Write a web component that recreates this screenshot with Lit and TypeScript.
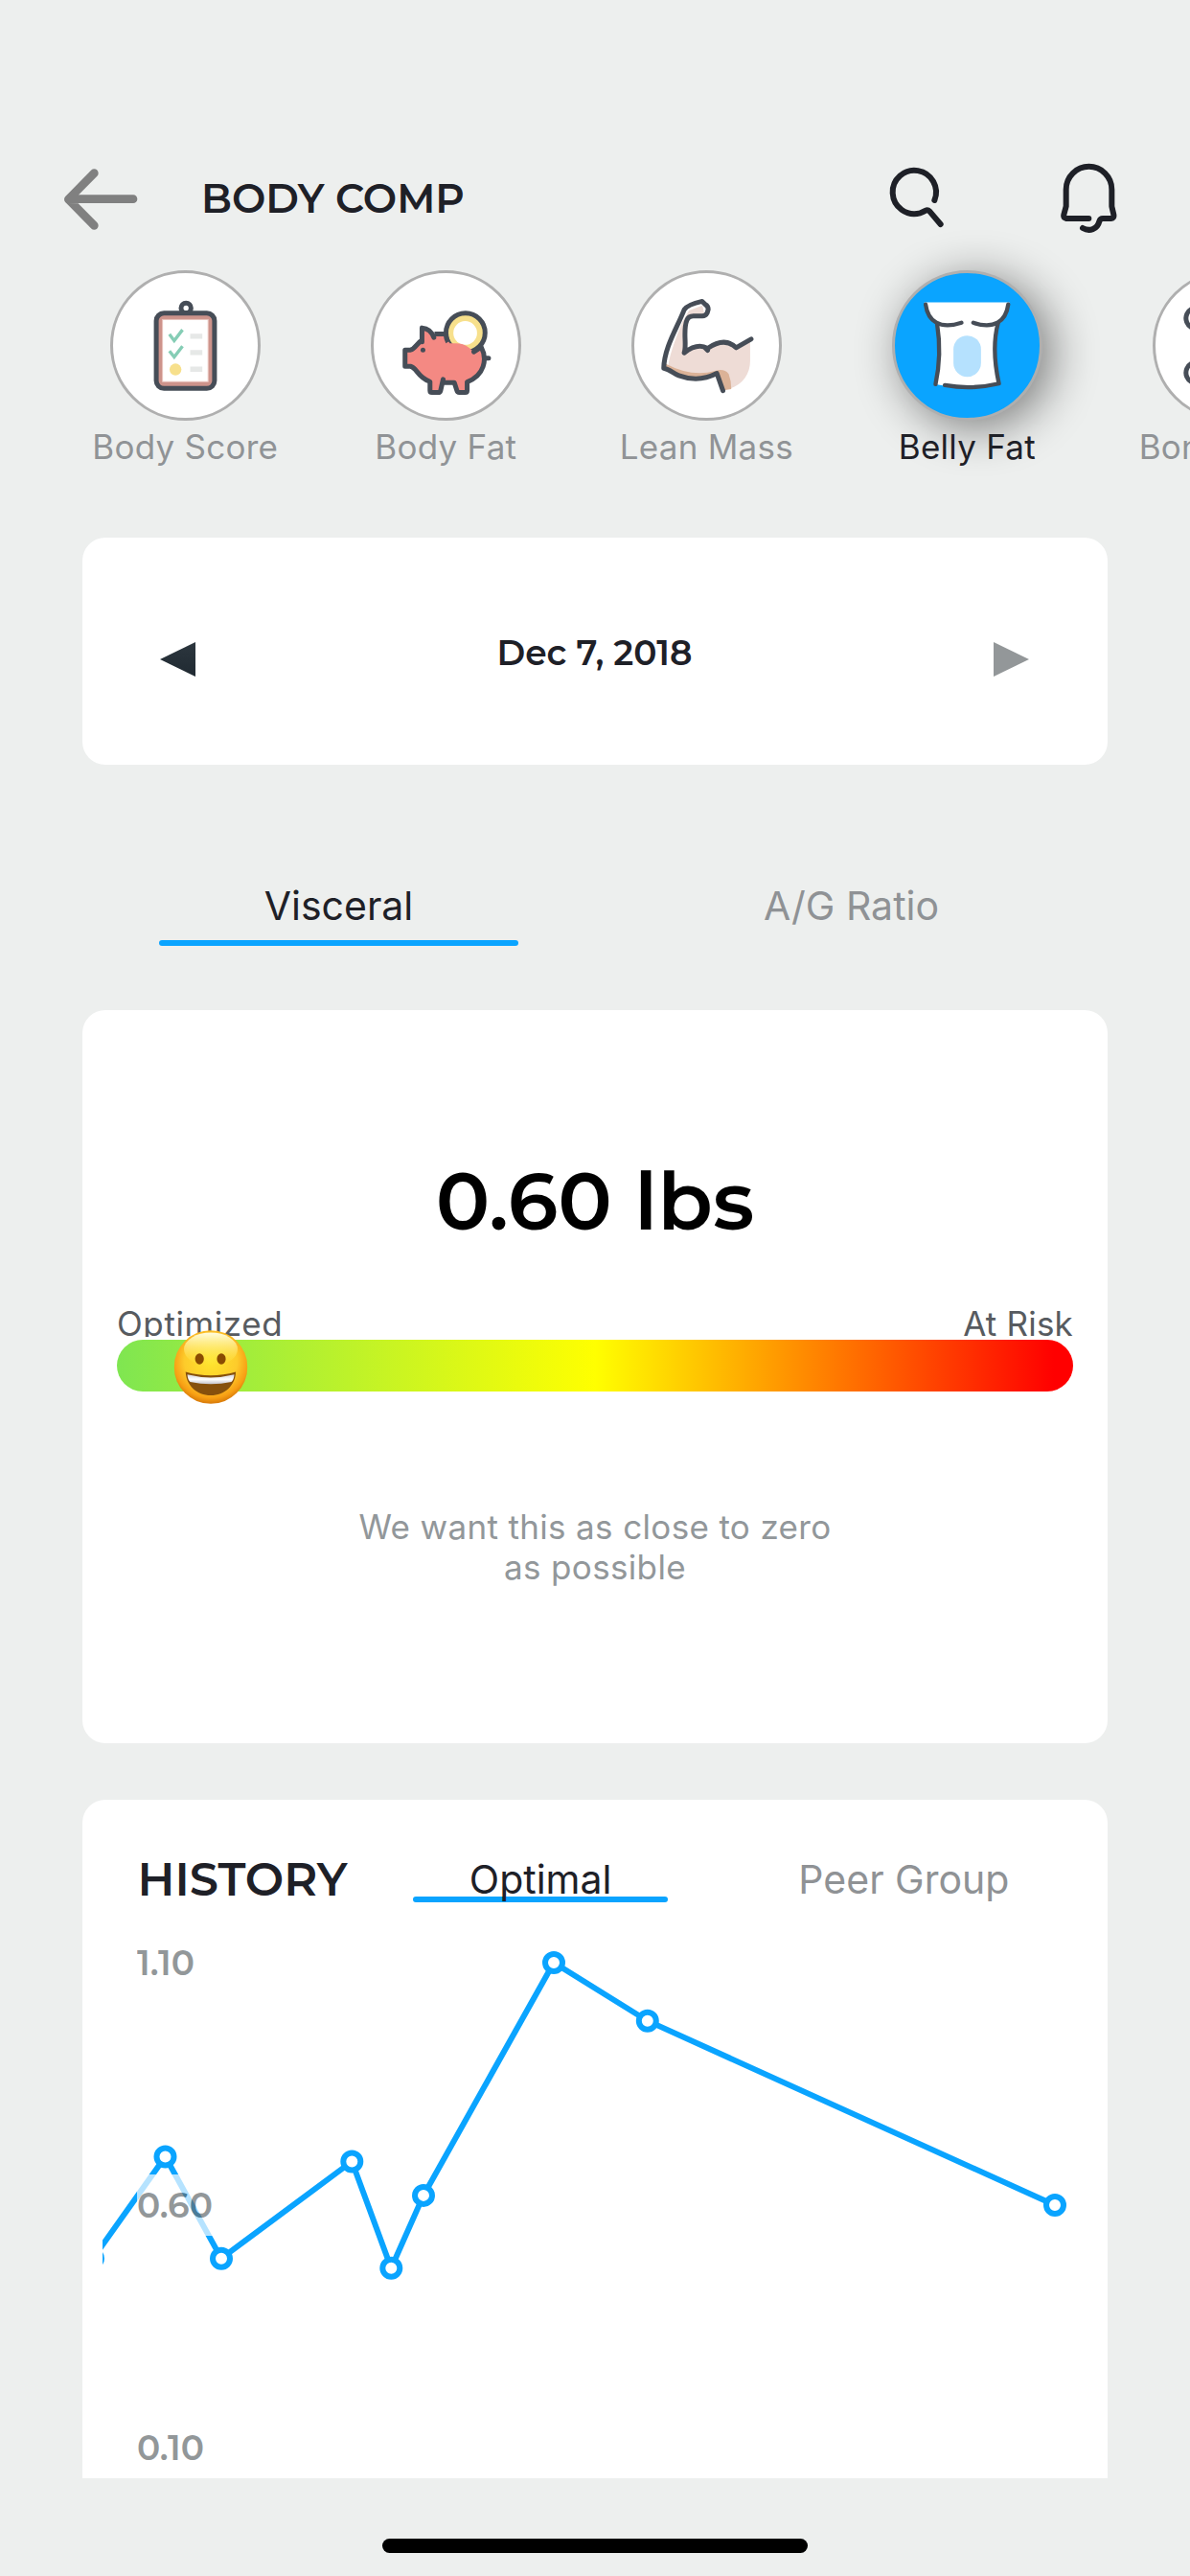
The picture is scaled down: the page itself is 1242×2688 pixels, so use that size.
import { html, css, svg, LitElement } from 'lit'
import { customElement, state } from 'lit/decorators.js'
import { classMap } from 'lit/directives/class-map.js'

const scoreIcon = svg`
  <svg class="icon" viewBox="105 36 470 470">
    <circle cx="342" cy="154" r="15.5" fill="#fff" stroke="#464d57" stroke-width="15" />
    <rect x="249" y="170" width="182" height="235" rx="24" fill="#cd938b" stroke="#464d57" stroke-width="15" />
    <rect x="268.5" y="190" width="142.5" height="194" fill="#fff" stroke="#e9c4be" stroke-width="3" />
    <g fill="none" stroke="#85cdb5" stroke-width="10">
      <path d="M290 236L305 256L331 222" />
      <path d="M290 288L305 307L331 273" />
    </g>
    <circle cx="309" cy="346" r="18.5" fill="#f7e08c" />
    <path d="M355 242H393M355 293H393M355 345H393" stroke="#e6e8e7" stroke-width="16" />
  </svg>
`

const pigIcon = svg`
  <svg class="icon" viewBox="921 36 470 470">
    <circle cx="1217" cy="231" r="61" fill="#f7e08c" stroke="#464d57" stroke-width="15" />
    <circle cx="1216" cy="232" r="37" fill="#fff" />
    <path d="M1081 216Q1106 218 1118 248V236H1156Q1158 254 1168 264H1188C1214 264 1232 278 1243 293L1266 274C1286 312 1276 366 1222 385V412Q1222 418 1216 418H1197Q1191 418 1189 412L1182 387H1147L1140 412Q1138 418 1132 418H1112Q1106 418 1106 412V384C1068 368 1070 345 1045 337H1028V286H1045C1060 280 1062 262 1081 253Z" fill="#f48983" />
    <g fill="none" stroke="#464d57" stroke-width="15" stroke-linecap="round" stroke-linejoin="round">
      <path d="M1118 246Q1108 218 1081 216V260" />
      <path d="M1120 235H1155Q1157 252 1162 260" stroke-linecap="butt" />
      <path d="M1079 256C1064 265 1060 281 1045 285H1028V336H1045C1066 341 1066 370 1106 384V412Q1106 418 1112 418H1132Q1137 418 1139 412L1147 377M1148 387H1182L1190 412Q1192 418 1197 418H1216Q1222 418 1222 412V385C1276 364 1286 314 1266 276L1243 291" />
      <path d="M1279 311H1289" />
    </g>
    <circle cx="1084" cy="285" r="7.5" fill="#464d57" />
  </svg>
`

const armIcon = svg`
  <svg class="icon" viewBox="0 0 470 470">
    <path d="M222 110L180 126L160 160C142 205 122 250 114 304L200 332L267 322L288 374C340 368 371 330 371 284V222L327 243Q290 215 240 246Q208 236 166 258Q160 190 178 142L228 138Z" fill="#eedcd6" />
    <path d="M105 291Q190 336 262 314Q290 306 304 324Q312 345 312 371L288 375L267 323Q190 352 106 306Z" fill="#dbb297" />
    <path d="M374 215L327 242Q292 207 238 244Q206 226 165 258C174 232 160 190 173 157Q178 143 194 143H222Q232 143 237 133L240 122Q240 112 231 107L221 97Q174 108 165 123C143 180 103 240 101 306C120 309 130 322 148 329Q210 352 267 322L286 376M238 250L229 241" fill="none" stroke="#464d57" stroke-width="15" stroke-linecap="round" stroke-linejoin="round" />
  </svg>
`

const bellyIcon = svg`
  <svg class="icon" viewBox="0 0 470 470">
    <path d="M101 100H367C365 132 352 156 333 167Q311 250 334 356Q240 378 137 356Q156 250 142 164Q106 140 101 100Z" fill="#fff" />
    <rect x="192" y="204" width="86" height="129" rx="43" fill="#b5e1fe" />
    <g fill="none" stroke="#464d57" stroke-width="13" stroke-linecap="round" stroke-linejoin="round">
      <path d="M105 107C112 160 150 186 217 164" />
      <path d="M363 107C356 160 318 186 254 164" />
      <path d="M141 168Q156 264 136 356" />
      <path d="M331 166C314 230 320 290 334 354Q250 374 165 359" />
    </g>
  </svg>
`

const boneIcon = svg`
  <svg class="icon" viewBox="0 0 470 470">
    <path d="M150 120A30 30 0 1 0 124 180H346M150 350A30 30 0 1 1 124 290H346" fill="#fff" stroke="#464d57" stroke-width="15" stroke-linecap="round" />
  </svg>
`

const faceIcon = svg`
  <svg viewBox="0 0 77 77" width="77" height="77">
    <defs>
      <radialGradient id="skin" cx=".5" cy=".42" r=".6">
        <stop offset="0" stop-color="#ffe52e" />
        <stop offset=".6" stop-color="#fdcb2b" />
        <stop offset=".84" stop-color="#f79f14" />
        <stop offset="1" stop-color="#cf6f06" />
      </radialGradient>
      <linearGradient id="shine" x1="0" y1="0" x2="0" y2="1">
        <stop offset="0" stop-color="#fffde0" />
        <stop offset="1" stop-color="#fff04a" stop-opacity="0" />
      </linearGradient>
      <linearGradient id="teeth" x1="0" y1="0" x2="0" y2="1">
        <stop offset="0" stop-color="#d6d6dc" />
        <stop offset=".5" stop-color="#ffffff" />
        <stop offset="1" stop-color="#c4c4cb" />
      </linearGradient>
    </defs>
    <circle cx="38.5" cy="38.5" r="38.3" fill="url(#skin)" />
    <ellipse cx="38.5" cy="20" rx="28" ry="17.5" fill="url(#shine)" />
    <ellipse cx="26.7" cy="30" rx="4.6" ry="5.7" fill="#8a4b02" />
    <ellipse cx="49.5" cy="30" rx="4.6" ry="5.7" fill="#8a4b02" />
    <path d="M12.2 43.5Q38.5 51 64.6 43.5C64 58 53 68 38.5 68S13 58 12.2 43.5Z" fill="#86500c" />
    <path d="M14 46.3Q38.5 52.5 63 46.3Q62.5 52 60 54Q38.5 58.5 17 54Q14.5 52 14 46.3Z" fill="url(#teeth)" />
  </svg>
`

@customElement('metric-item')
class MetricItem extends LitElement {
  static properties = {
    label: { type: String },
    active: { type: Boolean },
    icon: { attribute: false },
  }
  static styles = css`
    :host {
      flex: none;
      width: 272px;
      display: flex;
      flex-direction: column;
      align-items: center;
    }
    .disc {
      box-sizing: border-box;
      width: 157px;
      height: 157px;
      border-radius: 50%;
      border: 3px solid #afafaf;
      background: #fff;
    }
    .disc.active {
      background: #0aa4ff;
      box-shadow: 10px 8px 48px rgba(0, 0, 0, 0.48);
    }
    .icon {
      display: block;
      width: 157px;
      height: 157px;
      margin: -3px;
    }
    .label {
      margin-top: 7px;
      font-size: 35px;
      line-height: 40px;
      letter-spacing: 0.25px;
      white-space: nowrap;
      color: #909396;
    }
    .label.active {
      color: #1e2027;
    }
  `
  declare label: string
  declare active: boolean
  declare icon: unknown

  render() {
    const active = { active: this.active }
    return html`
      <div class=${classMap({ disc: true, ...active })}>${this.icon}</div>
      <div class=${classMap({ label: true, ...active })}>${this.label}</div>
    `
  }
}

@customElement('tab-bar')
class TabBar extends LitElement {
  static properties = {
    tabs: { attribute: false },
    selected: { type: Number },
  }
  static styles = css`
    :host {
      display: flex;
    }
    .tab {
      flex: 1;
      display: flex;
      flex-direction: column;
      align-items: center;
      gap: var(--tab-gap, 11px);
      font-size: 41px;
      line-height: 50px;
      color: #8f9295;
      cursor: pointer;
    }
    .tab.selected {
      color: #1e2027;
    }
    .text {
      position: relative;
      z-index: 1;
    }
    .underline {
      width: 70%;
      height: 6px;
      margin-top: var(--line-shift, 0);
      border-radius: 3px;
    }
    .selected .underline {
      background: #0aa4ff;
    }
  `
  declare tabs: string[]
  declare selected: number

  render() {
    return html`
      ${this.tabs.map(
        (tab, i) => html`
          <div class=${classMap({ tab: true, selected: i === this.selected })} @click=${() => (this.selected = i)}>
            <span class="text">${tab}</span>
            <span class="underline"></span>
          </div>
        `
      )}
    `
  }
}

@customElement('history-chart')
class HistoryChart extends LitElement {
  static styles = css`
    :host {
      display: block;
      position: relative;
    }
    svg {
      display: block;
      overflow: hidden;
    }
    .line {
      fill: none;
      stroke: #0aa4ff;
      stroke-width: 6;
    }
    .dot {
      fill: #fff;
      stroke: #0aa4ff;
      stroke-width: 6;
    }
    .axis {
      position: absolute;
      left: 36px;
      top: 31px;
      display: flex;
      flex-direction: column;
      align-items: flex-start;
      gap: 189px;
    }
    .tick {
      background: #fff;
      opacity: 0.7;
      color: #656c6f;
      font: 600 36px / 64px Montserrat, Inter, sans-serif;
    }
  `
  points = [
    { x: -10, value: 0.49 },
    { x: 65.5, value: 0.7 },
    { x: 124, value: 0.49 },
    { x: 260.3, value: 0.69 },
    { x: 301.3, value: 0.47 },
    { x: 335, value: 0.62 },
    { x: 471, value: 1.1 },
    { x: 568.8, value: 0.98 },
    { x: 994, value: 0.6 },
  ]
  ticks = ['1.10', '0.60', '0.10']

  y(value: number) {
    return 63 + (1.1 - value) * 506
  }

  render() {
    const line = this.points.map((p) => `${p.x},${this.y(p.value)}`).join(' ')
    return html`
      <svg width="1028" height="601" viewBox="0 0 1028 601">
        <polyline class="line" points=${line} />
        ${this.points.map((p) => svg`<circle class="dot" cx=${p.x} cy=${this.y(p.value)} r="9" />`)}
      </svg>
      <div class="axis">${this.ticks.map((t) => html`<span class="tick">${t}</span>`)}</div>
    `
  }
}

@customElement('app-root')
class AppRoot extends LitElement {
  static styles = css`
    :host {
      display: flex;
      flex-direction: column;
      width: 1242px;
      height: 2688px;
      overflow: hidden;
      background: #edefee;
      color: #1e2027;
      font-family: Inter, "Liberation Sans", sans-serif;
    }
    svg {
      display: block;
      flex: none;
    }
    .stroke {
      fill: none;
      stroke: #1e2027;
      stroke-width: 18;
      stroke-linecap: round;
      stroke-linejoin: round;
    }
    .header {
      box-sizing: border-box;
      height: 282px;
      flex: none;
      padding: 170px 70px 0 63.5px;
      display: flex;
      align-items: flex-start;
    }
    .back {
      margin-top: 3px;
      stroke: #808080;
      stroke-width: 26;
    }
    .title {
      flex: 1;
      margin: 12px 0 0 62.5px;
      font: 600 42px / 50px Montserrat, Inter, sans-serif;
    }
    .search {
      margin-right: 112px;
    }
    .metrics {
      display: flex;
      padding-left: 57.3px;
    }
    .card {
      box-sizing: border-box;
      flex: none;
      margin: 0 86px;
      border-radius: 24px;
      background: #fff;
    }
    .date-card {
      height: 237px;
      margin-top: 75px;
      padding: 98px 82px 0 81px;
      display: flex;
      align-items: flex-start;
      justify-content: space-between;
    }
    .date {
      font: 600 36px / 44px Montserrat, Inter, sans-serif;
    }
    .prev,
    .next {
      margin-top: 11px;
      width: 37px;
      height: 36px;
      background: linear-gradient(#2c363e, #202a32);
      clip-path: polygon(100% 0, 100% 100%, 0 50%);
    }
    .next {
      background: #939799;
      clip-path: polygon(0 0, 100% 50%, 0 100%);
    }
    .main-tabs {
      margin: 122px 86px 0;
    }
    .value-card {
      height: 765px;
      margin-top: 67px;
      padding: 148px 36px 0;
      display: flex;
      flex-direction: column;
    }
    .value {
      text-align: center;
      color: #000;
      font: 600 84px / 102px Montserrat, Inter, sans-serif;
    }
    .range {
      margin-top: 55px;
      height: 36px;
      overflow: hidden;
      display: flex;
      justify-content: space-between;
      font-size: 35px;
      line-height: 44px;
      letter-spacing: 0.6px;
      color: #575b60;
    }
    .risk {
      letter-spacing: 0.2px;
    }
    .bar {
      position: relative;
      height: 54px;
      margin-top: 3px;
      border-radius: 27px;
      background: linear-gradient(90deg, #7fe651, #ffff00 50%, #ff0000 98%);
    }
    .face {
      position: absolute;
      top: -10px;
      transform: translateX(-50%);
    }
    .hint {
      width: 520px;
      margin: 120px auto 0;
      text-align: center;
      font-size: 35px;
      line-height: 42px;
      letter-spacing: 0.35px;
      color: #92979a;
    }
    .history-card {
      height: 708px;
      margin-top: 59px;
      border-radius: 24px 24px 0 0;
    }
    .history-head {
      height: 107px;
      padding: 0 23px 0 57.5px;
      display: flex;
      align-items: flex-start;
    }
    .history-title {
      width: 231px;
      padding-top: 54px;
      font: 600 48px / 58px Montserrat, Inter, sans-serif;
    }
    .history-tabs {
      flex: 1;
      margin-top: 58px;
      --tab-gap: 0px;
      --line-shift: -7px;
    }
    .chart {
      width: 1028px;
      margin-left: 21px;
    }
    .home-indicator {
      flex: none;
      width: 444px;
      height: 15px;
      margin: 63px auto 0;
      border-radius: 8px;
      background: #000;
    }
  `

  @state() metrics = [
    { label: 'Body Score', icon: scoreIcon },
    { label: 'Body Fat', icon: pigIcon },
    { label: 'Lean Mass', icon: armIcon },
    { label: 'Belly Fat', icon: bellyIcon },
    { label: 'Bone Mass', icon: boneIcon },
  ]
  @state() metric = 3
  @state() risk = 9.8

  render() {
    return html`
      <header class="header">
        <svg class="stroke back" width="84" height="70" viewBox="71 69 252 210">
          <path d="M174 92L93 174L174 256M93 174L130 173H296" />
        </svg>
        <div class="title">BODY COMP</div>
        <svg class="stroke search" width="66" height="70" viewBox="131 60 198 210">
          <path d="M285 177A68 68 0 1 0 240 217Q250 212 257 209Q264 206 270 212L304 252" />
        </svg>
        <svg class="stroke" width="70" height="74" viewBox="665 60 210 222">
          <path d="M768 234H698Q688 232 690 222L697 196V143A71 71 0 0 1 840 143V196L846 222Q848 233 838 234H812Q804 234 801 243C795 268 770 276 749 264" />
        </svg>
      </header>

      <div class="metrics">
        ${this.metrics.map(
          (m, i) => html`
            <metric-item .label=${m.label} .icon=${m.icon} .active=${i === this.metric} @click=${() => (this.metric = i)}></metric-item>
          `
        )}
      </div>

      <section class="card date-card">
        <div class="prev"></div>
        <div class="date">Dec 7, 2018</div>
        <div class="next"></div>
      </section>

      <tab-bar class="main-tabs" .tabs=${['Visceral', 'A/G Ratio']} .selected=${0}></tab-bar>

      <section class="card value-card">
        <div class="value">0.60 lbs</div>
        <div class="range">
          <span>Optimized</span>
          <span class="risk">At Risk</span>
        </div>
        <div class="bar">
          <div class="face" style="left: ${this.risk}%">${faceIcon}</div>
        </div>
        <div class="hint">We want this as close to zero as possible</div>
      </section>

      <section class="card history-card">
        <div class="history-head">
          <div class="history-title">HISTORY</div>
          <tab-bar class="history-tabs" .tabs=${['Optimal', 'Peer Group']} .selected=${0}></tab-bar>
        </div>
        <history-chart class="chart"></history-chart>
      </section>

      <div class="home-indicator"></div>
    `
  }
}
